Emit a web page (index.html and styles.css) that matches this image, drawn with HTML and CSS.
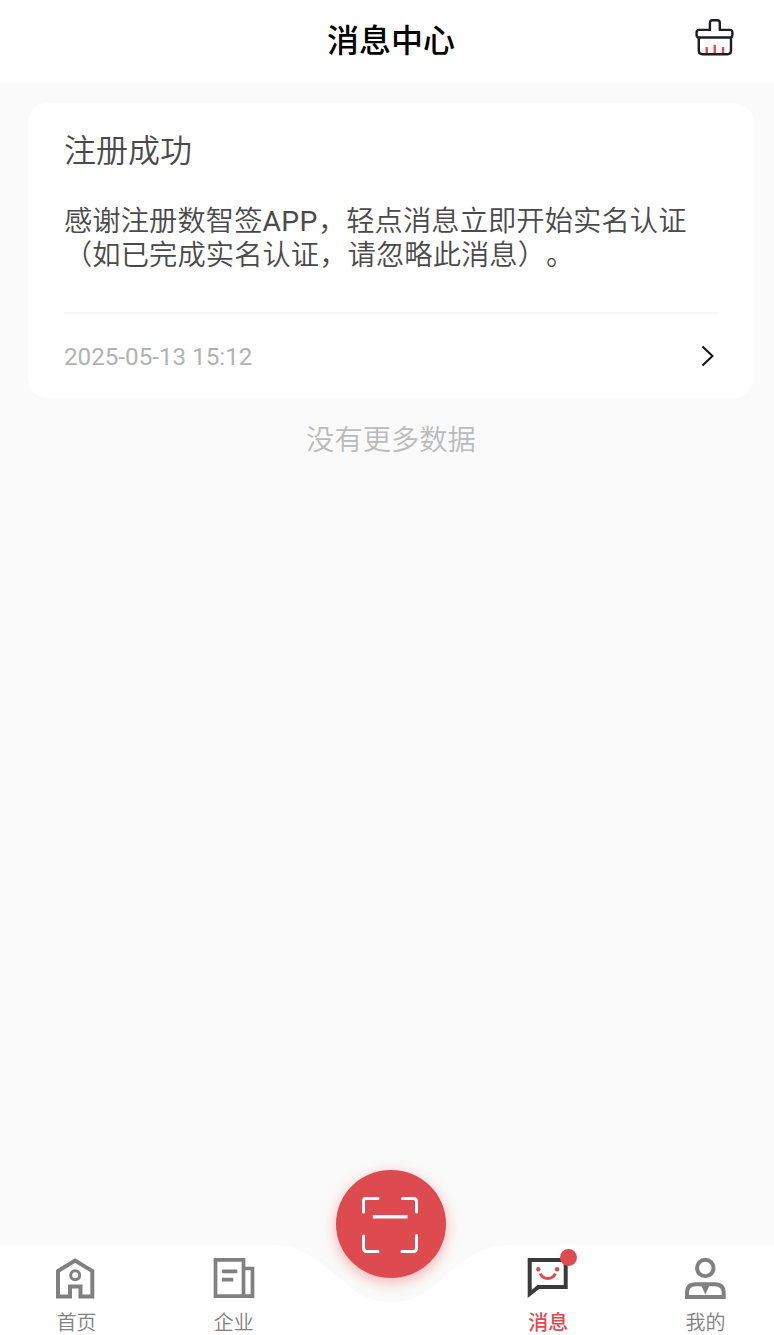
FILE: index.html
```html
<!DOCTYPE html>
<html lang="zh-CN">
<head>
  <meta charset="UTF-8">
  <title>消息中心</title>
  <meta name="viewport" content="width=device-width, initial-scale=1.0">
  <link rel="stylesheet" href="styles.css">
</head>
<body>

<div class="page">
  <!-- HEADER -->
  <header class="header">
    <h1>消息中心</h1>
    <button type="button" class="clear-btn" aria-label="清除">
      <svg width="40" height="40" viewBox="0 0 40 40" fill="none" stroke-width="2.4" stroke-linejoin="round">
        <path d="M11.7 35.5V29M19.7 35.5V26.7M28 35.5V29" stroke="#dd4b50"/>
        <path d="M3.800 20V32.500Q3.800 36.200 7.500 36.200H32.300Q36 36.200 36 32.500V20" stroke="#1d1d22"/>
        <path d="M14.900 11.900V4.700Q14.900 2.200 17.400 2.200H22.300Q24.800 2.200 24.800 4.700V11.900H34.900Q37.400 11.900 37.400 14.400V17Q37.400 19.500 34.900 19.500H4.100Q1.600 19.500 1.600 17V14.400Q1.600 11.900 4.100 11.900Z" stroke="#1d1d22"/>
      </svg>
    </button>
  </header>

  <!-- MESSAGE LIST -->
  <main class="list">
    <div class="card">
      <h2>注册成功</h2>
      <p>感谢注册数智签<span class="latin">APP</span>，轻点消息立即开始实名认证<br>（如已完成实名认证，请忽略此消息）。</p>
      <div class="card-footer">
        <span>2025-05-13 15:12</span>
        <svg width="14" height="22" viewBox="0 0 14 22" fill="none" stroke="#111" stroke-width="2">
          <path d="M1.500 1.500L11.500 11L1.500 20.500"/>
        </svg>
      </div>
    </div>
    <div class="no-more">没有更多数据</div>
  </main>

  <!-- BOTTOM TABS -->
  <nav class="tabbar">
    <svg class="tabbar-bg" width="782" height="90" viewBox="0 0 782 90">
      <path d="M0 0H271C304 0 320 17 344 37.500C358 50 372 57 391 57C410 57 424 50 438 37.500C462 17 478 0 511 0H782V90H0Z" fill="#fff"/>
    </svg>
    <a class="tab">
      <svg width="44" height="44" viewBox="0 0 44 44" fill="none" stroke="#808080" stroke-width="4">
        <path d="M4 15L21.100 4.500L38.300 15V40.400H26.500V30.500H16V40.400H4Z"/>
        <circle cx="21.200" cy="19.300" r="4.500" stroke-width="3"/>
      </svg>
      <span>首页</span>
    </a>
    <a class="tab">
      <svg width="44" height="44" viewBox="0 0 44 44" fill="none" stroke="#808080" stroke-width="3.700">
        <path d="M3.500 3.900H31.500V40.200H3.500ZM31.500 12.500H40.500V40.200H31.500"/>
        <path d="M10 15.400H25.300M10 23.700H21.300"/>
      </svg>
      <span>企业</span>
    </a>
    <a class="tab scan">
      <span class="scan-btn">
        <svg width="58" height="58" viewBox="0 0 58 58" fill="none" stroke="#fff" stroke-width="3" stroke-linecap="round">
          <path d="M2.500 16V5Q2.500 2.500 5 2.500H17M41.500 2.500H52.500Q55.500 2.500 55.500 5.500V16M2.500 40V52Q2.500 55.500 5.500 55.500H17M41 55.500H52.500Q55.500 55.500 55.500 52V39.500"/>
          <path d="M11.800 20.800H46.500" stroke-linecap="butt" stroke-width="3.400"/>
        </svg>
      </span>
    </a>
    <a class="tab active">
      <svg width="44" height="44" viewBox="0 0 44 44" fill="none">
        <path d="M1.700 2H41.700V33H13L1.700 42ZM5.700 6V34L11.500 29H37.700V6Z" fill="#3a3a3a" fill-rule="evenodd"/>
        <path d="M14.300 17.500C17 24 26.700 24 29.400 17.500" stroke="#dd4b50" stroke-width="3"/>
        <circle cx="12.300" cy="13.300" r="2.200" fill="#dd4b50"/>
        <circle cx="31.100" cy="13.300" r="2.200" fill="#dd4b50"/>
      </svg>
      <i class="dot"></i>
      <span>消息</span>
    </a>
    <a class="tab">
      <svg width="44" height="44" viewBox="0 0 44 44" fill="none" stroke="#808080" stroke-width="4">
        <circle cx="21.300" cy="12" r="8.200"/>
        <path d="M3 41V37Q3 28.300 11.700 28.300H31Q39.700 28.300 39.700 37V41Z"/>
        <path d="M17 29H25.700L21.300 38.500Z" fill="#808080" stroke="none"/>
      </svg>
      <span>我的</span>
    </a>
  </nav>
</div>

</body>
</html>
```
FILE: styles.css
```css
body {
  margin: 0;
  font-family: Roboto, "Noto Sans CJK SC", sans-serif;
  background: #fafafa;
  overflow: hidden;
  text-spacing-trim: space-all;
}

.page {
  width: 782px;
  height: 1335px;
  display: flex;
  flex-direction: column;
}

.header {
  position: relative;
  height: 83px;
  background: #fff;
  display: flex;
  justify-content: center;
}

.header h1 {
  margin: 0;
  font-size: 32px;
  font-weight: 500;
  line-height: 82px;
  color: #000;
}

.clear-btn {
  position: absolute;
  top: 18px;
  right: 47px;
  padding: 0;
  border: none;
  background: none;
  cursor: pointer;
}

.clear-btn svg {
  display: block;
}

.list {
  flex: 1;
  padding: 20px 28px 0;
}

.card {
  box-sizing: border-box;
  height: 295px;
  background: #fff;
  border-radius: 20px;
  padding: 28px 36px 0;
}

.card h2 {
  margin: 0;
  font-size: 32px;
  font-weight: 350;
  line-height: 40px;
  color: #4a4a4a;
}

.card p {
  margin: 34px 0 0;
  font-size: 28.3px;
  font-weight: 350;
  line-height: 34px;
  letter-spacing: 0.06px;
  color: #4a4a4a;
  white-space: nowrap;
}

.card p .latin {
  font-weight: 400;
  letter-spacing: 0.4px;
}

.card-footer {
  display: flex;
  justify-content: space-between;
  align-items: center;
  height: 84px;
  margin-top: 39px;
  padding-right: 3px;
  border-top: 2px solid #f6f6f6;
  font-size: 24.2px;
  color: #b2b2b2;
}

.card-footer span {
  padding-top: 2px;
}

.no-more {
  margin-top: 23px;
  text-align: center;
  font-size: 28.3px;
  font-weight: 350;
  line-height: 40px;
  color: #bbb;
}

.tabbar {
  position: relative;
  height: 90px;
  display: flex;
  justify-content: center;
}

.tabbar-bg {
  position: absolute;
  top: 0;
  left: 0;
}

.tab {
  position: relative;
  flex: 0 0 157.3px;
  display: flex;
  flex-direction: column;
  align-items: center;
  padding-top: 11px;
  font-size: 20px;
  font-weight: 350;
  line-height: 24px;
  color: #808080;
}

.tab > span {
  margin-top: 11px;
}

.tab.active {
  color: #dd4b50;
  font-weight: 500;
}

.dot {
  position: absolute;
  top: 4px;
  left: 90px;
  width: 17px;
  height: 17px;
  border-radius: 50%;
  background: #dd4b50;
}

.tab .scan-btn {
  position: absolute;
  box-sizing: border-box;
  top: -75px;
  margin: 0;
  padding: 1px 2px 0 0;
  width: 110px;
  height: 108px;
  border-radius: 50%;
  background: #dd4b50;
  box-shadow: 0 4px 14px rgba(240, 70, 75, 0.4);
  display: flex;
  justify-content: center;
  align-items: center;
}
```
